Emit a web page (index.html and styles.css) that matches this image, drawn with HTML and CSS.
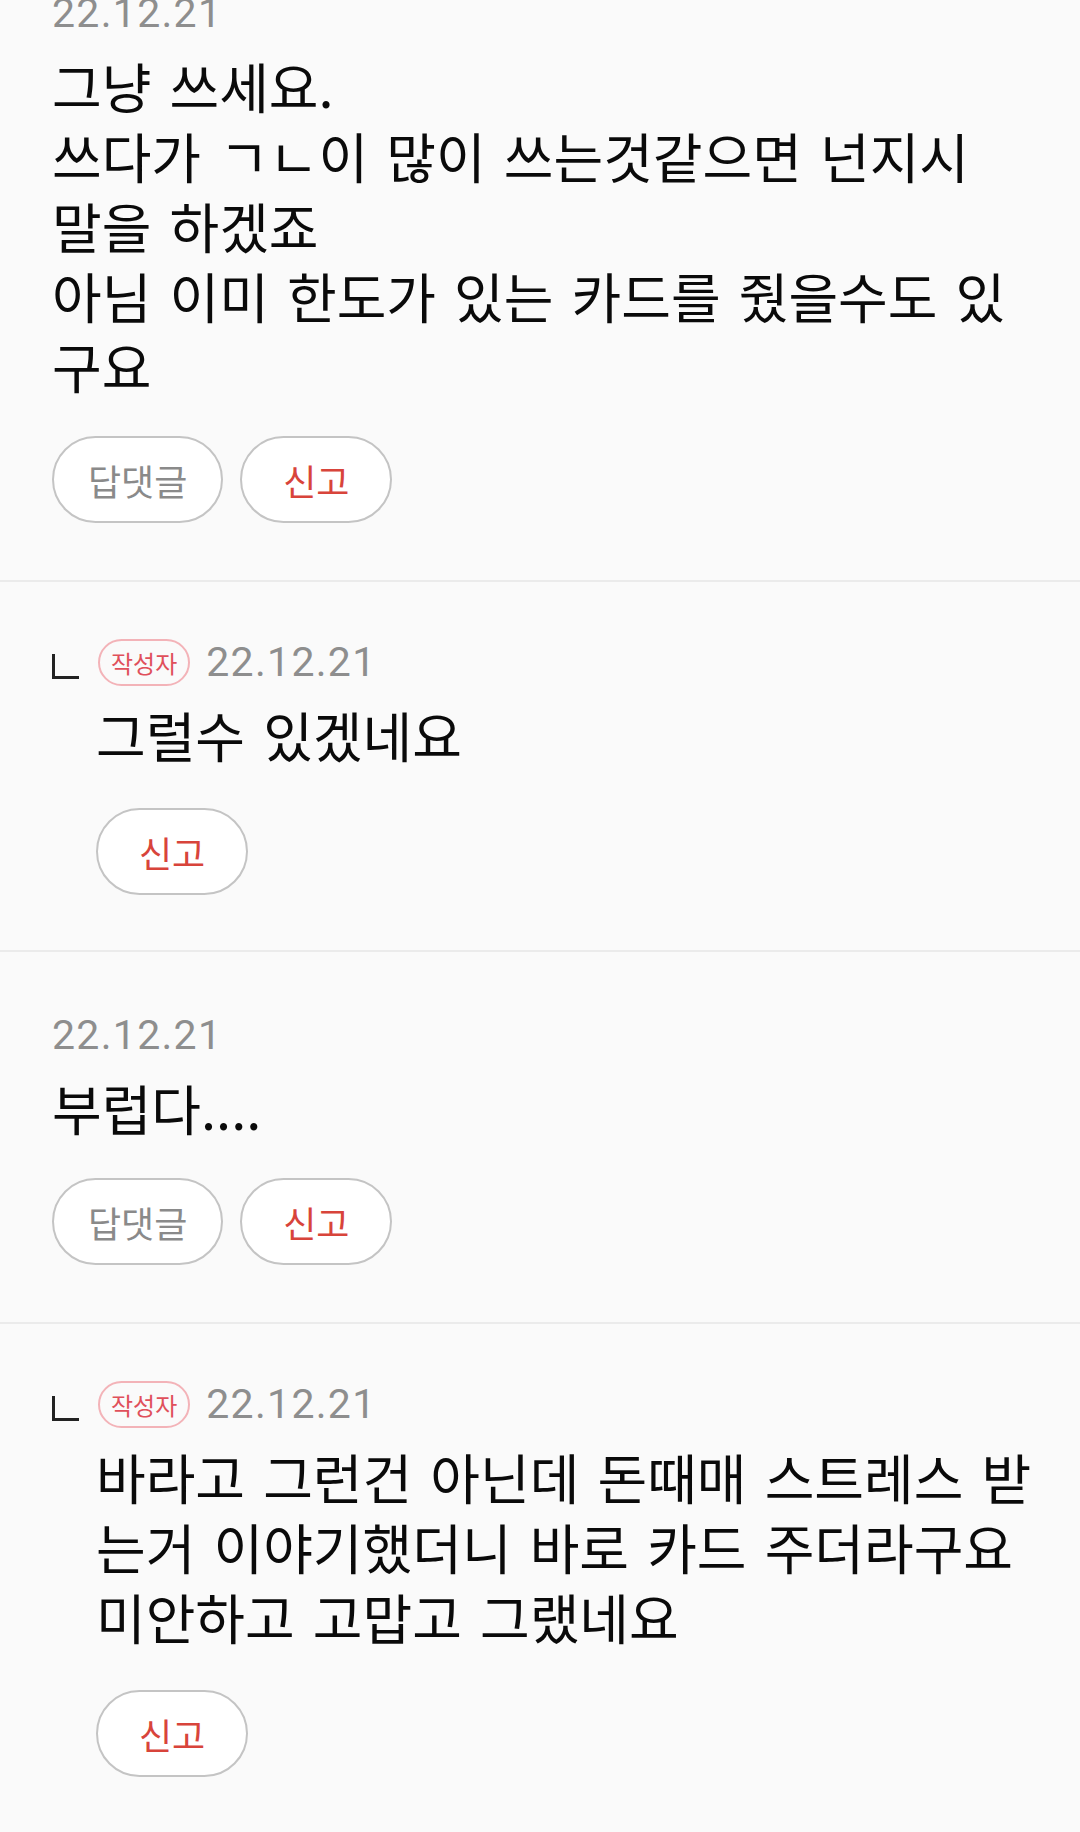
FILE: index.html
```html
<!DOCTYPE html>
<html lang="ko">
<head>
<meta charset="utf-8">
<link rel="stylesheet" href="styles.css">
</head>
<body>
<div class="list">
  <section class="comment first">
    <div class="meta"><span class="date">22.12.21</span></div>
    <p class="body">그냥 쓰세요.<br>쓰다가 ㄱㄴ이 많이 쓰는것같으면 넌지시<br>말을 하겠죠<br>아님 이미 한도가 있는 카드를 줬을수도 있<br>구요</p>
    <div class="actions"><button class="btn reply-btn">답댓글</button><button class="btn report">신고</button></div>
  </section>
  <section class="comment reply">
    <div class="meta"><span class="mark"></span><span class="badge">작성자</span><span class="date">22.12.21</span></div>
    <p class="body">그럴수 있겠네요</p>
    <div class="actions"><button class="btn report">신고</button></div>
  </section>
  <section class="comment">
    <div class="meta"><span class="date">22.12.21</span></div>
    <p class="body">부럽다....</p>
    <div class="actions"><button class="btn reply-btn">답댓글</button><button class="btn report">신고</button></div>
  </section>
  <section class="comment reply">
    <div class="meta"><span class="mark"></span><span class="badge">작성자</span><span class="date">22.12.21</span></div>
    <p class="body">바라고 그런건 아닌데 돈때매 스트레스 받<br>는거 이야기했더니 바로 카드 주더라구요<br>미안하고 고맙고 그랬네요</p>
    <div class="actions"><button class="btn report">신고</button></div>
  </section>
</div>
</body>
</html>
```
FILE: styles.css
```css
html, body {
  margin: 0;
  padding: 0;
  background: #fafafa;
}
body {
  font-family: "Noto Sans CJK KR", "Noto Sans", sans-serif;
  color: #0a0a0a;
  overflow: hidden;
}
.list {
  position: relative;
}
.list::before {
  content: "";
  position: absolute;
  top: 0;
  left: 0;
  right: 0;
  height: 2px;
  background: #ebebeb;
  z-index: 2;
}
.comment {
  padding: 57px 20px 57px 52px;
  border-bottom: 2px solid #ebebeb;
}
.comment.first {
  padding-top: 0;
  margin-top: -13px;
}
.comment.reply {
  padding-bottom: 55px;
}
.meta {
  display: flex;
  align-items: center;
  height: 48px;
  padding-top: 2px;
}
.first .meta {
  margin-top: -3px;
  margin-bottom: 3px;
}
.reply .meta {
  padding-top: 0;
  margin-top: -1px;
  margin-bottom: 1px;
}
.date {
  font-family: Roboto, "Liberation Sans", sans-serif;
  font-size: 41px;
  letter-spacing: 1.3px;
  color: #8e8e8e;
  line-height: 48px;
}
.mark {
  width: 24px;
  height: 22px;
  border-left: 3px solid #222;
  border-bottom: 3px solid #222;
  margin: 9px 19px 0 0;
}
.badge {
  display: inline-flex;
  align-items: center;
  justify-content: center;
  height: 47px;
  box-sizing: border-box;
  padding: 0 11px;
  border: 2px solid #f3b3b8;
  border-radius: 24px;
  font-size: 24px;
  color: #e0505b;
  margin-right: 16px;
}
.body {
  margin: 14px 0 0;
  font-size: 54px;
  line-height: 70px;
  word-spacing: 3px;
  white-space: nowrap;
}
.actions {
  display: flex;
  gap: 17px;
  margin-top: 35px;
}
.reply .body {
  margin-left: 44px;
}
.reply .actions {
  margin-left: 44px;
  margin-top: 38px;
}
.btn {
  display: inline-flex;
  align-items: center;
  justify-content: center;
  height: 87px;
  min-width: 152px;
  box-sizing: border-box;
  padding: 0 34px;
  background: #fff;
  border: 2.5px solid #c4c4c4;
  border-radius: 44px;
  font-family: "Noto Sans CJK KR", sans-serif;
  font-size: 36px;
}
.reply-btn {
  color: #8a8a8a;
}
.report {
  color: #d8443b;
}
```
